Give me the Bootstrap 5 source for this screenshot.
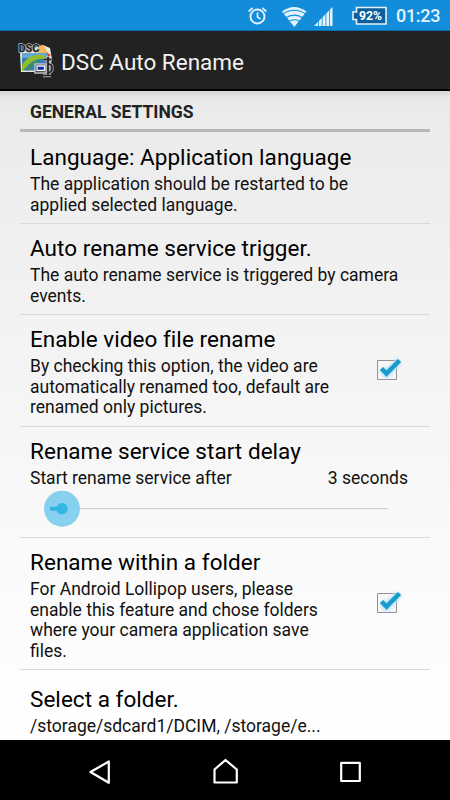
<!DOCTYPE html>
<html lang="en">
<head>
<meta charset="utf-8">
<meta name="viewport" content="width=device-width, initial-scale=1">
<title>DSC Auto Rename</title>
<link href="https://cdn.jsdelivr.net/npm/bootstrap@5.3.0/dist/css/bootstrap.min.css" rel="stylesheet">
<style>
body{font-family:Roboto,"Liberation Sans",sans-serif;height:800px;background:#000;color:#0a0a0a}
.status-bar{height:31px;background:#138dda;border-bottom:1px solid #0c6cab;color:#e3f2fd}
.clock{font-size:18px;line-height:30px;padding-top:2px;font-weight:500;width:44px;white-space:nowrap;letter-spacing:-.3px}
.app-bar{height:60px;background:#222;border-bottom:2px solid #000;color:#f2f2f2;padding-left:15px}
.app-title{font-size:22.5px;line-height:26px;padding-top:4px}
.settings{height:649px;background:linear-gradient(#d4d4d4 0,#e9e9e9 7px,#ebebeb 20px,#f6f6f6 330px,#fff 640px);padding:0 20px}
.section-head{height:41px;border-bottom:3px solid #b8b8b8;font-size:17.5px;line-height:20px;font-weight:700;padding:11px 10px 0;color:#222}
.pref{border-bottom:1.5px solid #d9d9d9;padding:10px 10px 0}
.pref-title{font-size:22.5px;line-height:28px;white-space:nowrap;color:#000;letter-spacing:.04px}
.pref-text{font-size:17.5px;line-height:20.6px;white-space:nowrap;color:#111;padding-top:3px}
.h-first{height:92px;padding-top:11px}.h-two{height:91px}.h-video{height:112px}.h-delay{height:111px}.h-folder{height:132px}
.pref-last{border:0;padding-top:15px}
.tick{width:30px;height:30px;margin:0 18px 15px 0;flex:none}
.nav-keys{height:60px;background:#000}
</style>
</head>
<body class="overflow-hidden">
<div class="status-bar d-flex align-items-center">
  <svg width="396" height="30" viewBox="0 0 396 30" fill="none" stroke="#e3f2fd">
    <circle cx="257.500" cy="16.500" r="7" stroke-width="1.900"/>
    <path d="M257.500 12.500V17l3 2M248.700 11.500l4-3.600M266.300 11.500l-4-3.600" stroke-width="1.700"/>
    <g stroke="none" fill="#e3f2fd"><path d="M282 11.500Q294 2.500 306.500 11.500L294.300 27Z"/><path d="M314 26L332.500 7V26Z"/></g>
    <path d="M282 14.500Q294.300 6 306.500 14.500M285 18.300Q294.300 12 303.500 18.300M288 22Q294.300 17.500 300.500 22" stroke="#138dda" stroke-width="1.200"/>
    <path d="M318.500 8V27M322.200 8V27M325.900 8V27M329.500 8V27" stroke="#138dda" stroke-width=".8"/>
    <path d="M356.500 7.500H386V24H356.500V19.500H353V12H356.500Z" fill="#0d5f9c" stroke-width="1.600"/>
    <text x="359" y="20" font-size="12" font-weight="700" textLength="23" lengthAdjust="spacingAndGlyphs" fill="#fff" stroke="none">92%</text>
  </svg>
  <span class="clock">01:23</span>
</div>
<header class="app-bar d-flex align-items-center">
  <svg width="46" height="46" viewBox="15 38 46 46">
    <path d="M20 53L43 46 50 49 52 60 49 73 21 73Z" fill="#e6e6df"/>
    <path d="M38 47L44 46 48 55H38Z" fill="#f5b657"/>
    <path d="M22 54H47V71.500H22Z" fill="#327fb8"/>
    <path d="M22 54H47V59H22Z" fill="#67a9d4"/>
    <path d="M22 66Q31 52 45 57V60Q34 58 23 71.500H22Z" fill="#91bd28"/>
    <path d="M26 71.500Q32 61 40 62Q31 65 29 71.500Z" fill="#4b9434"/>
    <path d="M35 65H46V74H35Z" fill="#222" stroke="#bfc5cc" stroke-width="1.500"/>
    <path d="M37 67H44.500V71.500H37Z" fill="#102da7" stroke="#f5f5f5" stroke-width="1.300"/>
    <path d="M48 58V76M44 60.500H51.500M43 76.500H51M48 65Q53 65 52 70 52 73 48 74" fill="none" stroke="#aaa" stroke-width="3.400"/>
    <path d="M48 58V76M44 60.500H51.500M43 76.500H51M48 65Q53 65 52 70 52 73 48 74" fill="none" stroke="#222" stroke-width="1.700"/>
    <path d="M46 53L51 56 48 58Z" fill="#d94b21"/>
    <text x="18.500" y="53" font-size="10" font-weight="700" textLength="21" lengthAdjust="spacingAndGlyphs" fill="#1a1a1a" stroke="#bbb" stroke-width="1.400" paint-order="stroke">DSC</text>
  </svg>
  <div class="app-title">DSC Auto Rename</div>
</header>
<main class="settings overflow-hidden">
  <div class="section-head">GENERAL SETTINGS</div>
  <section class="pref h-first">
    <div class="pref-title">Language: Application language</div>
    <div class="pref-text">The application should be restarted to be<br>applied selected language.</div>
  </section>
  <section class="pref h-two">
    <div class="pref-title">Auto rename service trigger.</div>
    <div class="pref-text">The auto rename service is triggered by camera<br>events.</div>
  </section>
  <section class="pref h-video d-flex justify-content-between">
    <div>
      <div class="pref-title">Enable video file rename</div>
      <div class="pref-text">By checking this option, the video are<br>automatically renamed too, default are<br>renamed only pictures.</div>
    </div>
    <svg class="tick align-self-center" viewBox="0 0 30 30"><use href="#check"/></svg>
  </section>
  <section class="pref h-delay">
    <div class="pref-title">Rename service start delay</div>
    <div class="pref-text d-flex justify-content-between"><span>Start rename service after</span><span class="me-2 pe-1">3 seconds</span></div>
    <svg class="d-block" width="370" height="40" viewBox="30 489 370 40">
      <path d="M62 508.700H388" stroke="#d2d2d2" stroke-width="1.300"/>
      <circle cx="62" cy="508.700" r="18" fill="#87d0ee"/>
      <path d="M50 508.700H62" stroke="#33b5e5" stroke-width="4"/>
      <circle cx="62" cy="508.700" r="5.700" fill="#33b5e5"/>
    </svg>
  </section>
  <section class="pref h-folder d-flex justify-content-between">
    <div>
      <div class="pref-title">Rename within a folder</div>
      <div class="pref-text">For Android Lollipop users, please<br>enable this feature and chose folders<br>where your camera application save<br>files.</div>
    </div>
    <svg class="tick align-self-center" viewBox="0 0 30 30"><use href="#check"/></svg>
  </section>
  <section class="pref pref-last">
    <div class="pref-title">Select a folder.</div>
    <div class="pref-text">/storage/sdcard1/DCIM, /storage/e...</div>
  </section>
</main>
<nav class="nav-keys">
  <svg class="d-block" width="450" height="60" viewBox="0 740 450 60" fill="none" stroke="#fff" stroke-width="2.200" stroke-linejoin="round">
    <path d="M90.500 772L108.800 761.500V782.800Z"/>
    <path d="M214.500 782.500V769.500L225.500 760 236.800 769.500V782.500Z"/>
    <path d="M341.200 762.800H359.800V781H341.200Z"/>
  </svg>
</nav>
<svg width="0" height="0" class="d-block">
  <defs>
    <filter id="halo" x="-50%" y="-50%" width="200%" height="200%"><feGaussianBlur stdDeviation="1.500"/></filter>
    <g id="check">
      <path d="M5.500 7.500H24.500V26.500H5.500Z" fill="#f7f7f7" stroke="#929292"/>
      <path d="M10 16L14.500 21 27.500 7.500" fill="none" stroke="#aee2f7" stroke-width="7" filter="url(#halo)"/>
      <path d="M9.500 15.500L14.500 20.500 27.500 7.500" fill="none" stroke="#189bcb" stroke-width="4.500"/>
    </g>
  </defs>
</svg>
<script src="https://cdn.jsdelivr.net/npm/bootstrap@5.3.0/dist/js/bootstrap.bundle.min.js"></script>
</body>
</html>
